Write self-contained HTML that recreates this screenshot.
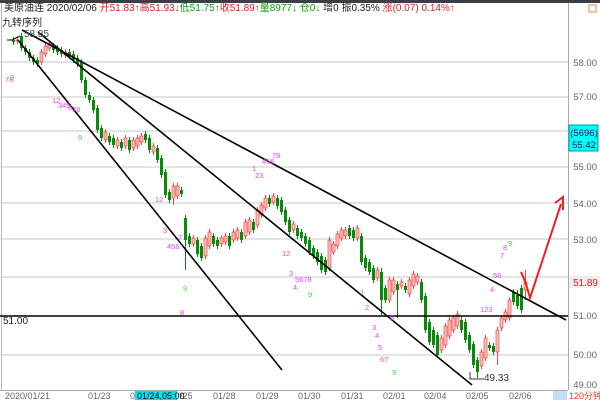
<!DOCTYPE html>
<html><head><meta charset="utf-8"><style>
body{margin:0;width:600px;height:400px;overflow:hidden;background:#fff;font-family:"Liberation Sans","Noto Sans CJK SC",sans-serif}
svg{position:absolute;left:0;top:0}
</style></head><body>
<svg width="600" height="400" viewBox="0 0 600 400" font-family="Liberation Sans, Noto Sans CJK SC, sans-serif">
<rect x="0" y="0" width="600" height="3" fill="#3a3f47"/>
<line x1="1.5" y1="3" x2="1.5" y2="390" stroke="#bbb"/>
<g stroke="#d4d4d4" stroke-width="1.3">
<line x1="0" y1="62" x2="568" y2="62"/><line x1="0" y1="97" x2="568" y2="97"/>
<line x1="0" y1="131" x2="568" y2="131"/><line x1="0" y1="167" x2="568" y2="167"/>
<line x1="0" y1="203" x2="568" y2="203"/><line x1="0" y1="239" x2="568" y2="239"/>
<line x1="0" y1="277" x2="568" y2="277"/><line x1="0" y1="355" x2="568" y2="355"/>
</g>
<path stroke="#0a8a0a" stroke-width="1" fill="none" d="M13.5 37V45 M21.5 33V51 M25.5 45V55 M29.5 49V61 M33.5 55V65 M37.5 57V67 M53.5 43V53 M57.5 45V55 M61.5 47V57 M69.5 49V59 M73.5 51V63 M77.5 55V67 M81.5 59V83 M85.5 77V98 M89.5 92V103 M93.5 97V113 M97.5 105V133 M101.5 125V141 M109.5 133V145 M113.5 135V148 M121.5 139V151 M129.5 137V153 M145.5 131V143 M149.5 135V153 M157.5 145V163 M161.5 155V178 M165.5 169V198 M169.5 189V203 M181.5 187V197 M185.5 215V270 M189.5 233V247 M197.5 237V257 M201.5 243V261 M213.5 233V247 M217.5 237V249 M229.5 233V249 M241.5 229V243 M253.5 219V233 M269.5 195V207 M277.5 195V209 M281.5 197V215 M285.5 207V225 M289.5 217V235 M297.5 225V239 M301.5 229V241 M305.5 233V247 M309.5 237V255 M313.5 245V259 M317.5 249V265 M321.5 253V273 M325.5 257V275 M349.5 225V239 M353.5 227V241 M361.5 233V265 M365.5 255V271 M369.5 259V275 M373.5 265V283 M381.5 268V315 M385.5 285V303 M397.5 281V318 M405.5 283V293 M421.5 279V303 M425.5 293V333 M429.5 319V345 M433.5 327V348 M437.5 332V358 M461.5 317V333 M465.5 319V343 M469.5 332V353 M473.5 341V368 M477.5 357V378 M489.5 342V351 M493.5 343V355 M513.5 289V305 M517.5 290V309 M521.5 285V313"/>
<path fill="#0a8a0a" d="M12 40h3V42h-3z M20 36h3V48h-3z M24 48h3V52h-3z M28 52h3V58h-3z M32 58h3V62h-3z M36 60h3V64h-3z M52 46h3V50h-3z M56 48h3V52h-3z M60 50h3V54h-3z M68 52h3V56h-3z M72 54h3V60h-3z M76 58h3V64h-3z M80 62h3V80h-3z M84 80h3V95h-3z M88 95h3V100h-3z M92 100h3V110h-3z M96 108h3V130h-3z M100 128h3V138h-3z M108 136h3V142h-3z M112 138h3V145h-3z M120 142h3V148h-3z M128 140h3V150h-3z M144 134h3V140h-3z M148 138h3V150h-3z M156 148h3V160h-3z M160 158h3V175h-3z M164 172h3V195h-3z M168 192h3V200h-3z M180 190h3V194h-3z M184 218h3V240h-3z M188 236h3V244h-3z M196 240h3V254h-3z M200 246h3V258h-3z M212 236h3V244h-3z M216 240h3V246h-3z M228 236h3V246h-3z M240 232h3V240h-3z M252 222h3V230h-3z M268 198h3V204h-3z M276 198h3V206h-3z M280 200h3V212h-3z M284 210h3V222h-3z M288 220h3V232h-3z M296 228h3V236h-3z M300 232h3V238h-3z M304 236h3V244h-3z M308 240h3V252h-3z M312 248h3V256h-3z M316 252h3V262h-3z M320 256h3V270h-3z M324 260h3V272h-3z M348 228h3V236h-3z M352 230h3V238h-3z M360 236h3V262h-3z M364 258h3V268h-3z M368 262h3V272h-3z M372 268h3V280h-3z M380 272h3V300h-3z M384 288h3V300h-3z M396 284h3V290h-3z M404 286h3V290h-3z M420 282h3V300h-3z M424 296h3V330h-3z M428 322h3V342h-3z M432 330h3V345h-3z M436 335h3V355h-3z M460 320h3V330h-3z M464 322h3V340h-3z M468 335h3V350h-3z M472 344h3V365h-3z M476 360h3V372h-3z M488 345h3V348h-3z M492 346h3V352h-3z M512 292h3V302h-3z M516 295h3V306h-3z M520 288h3V310h-3z"/>
<path stroke="#f04848" stroke-width="1" fill="none" d="M17.5 37V44 M41.5 49V65 M45.5 43V57 M49.5 41V51 M65.5 49V58 M105.5 129V143 M117.5 137V149 M125.5 135V149 M133.5 137V151 M137.5 135V149 M141.5 133V145 M153.5 143V155 M173.5 183V205 M177.5 183V199 M193.5 235V247 M205.5 235V259 M209.5 229V249 M221.5 235V247 M225.5 233V245 M233.5 229V243 M237.5 227V241 M245.5 219V239 M249.5 217V235 M257.5 207V228 M261.5 202V218 M265.5 195V211 M273.5 193V205 M293.5 221V233 M329.5 237V271 M333.5 241V255 M337.5 231V249 M341.5 227V241 M345.5 227V239 M357.5 225V241 M377.5 267V281 M389.5 277V303 M393.5 277V295 M401.5 279V289 M409.5 277V297 M413.5 271V289 M417.5 273V285 M441.5 335V353 M445.5 323V348 M449.5 317V339 M453.5 315V333 M457.5 311V329 M481.5 349V369 M485.5 335V361 M497.5 327V365 M501.5 315V331 M505.5 309V323 M509.5 297V321 M525.5 270V300"/>
<path fill="#fac0c0" stroke="#f04848" stroke-width="0.7" d="M16 40h3V41h-3z M40 52h3V62h-3z M44 46h3V54h-3z M48 44h3V48h-3z M64 52h3V55h-3z M104 132h3V140h-3z M116 140h3V146h-3z M124 138h3V146h-3z M132 140h3V148h-3z M136 138h3V146h-3z M140 136h3V142h-3z M152 146h3V152h-3z M172 186h3V198h-3z M176 186h3V196h-3z M192 238h3V244h-3z M204 238h3V256h-3z M208 232h3V246h-3z M220 238h3V244h-3z M224 236h3V242h-3z M232 232h3V240h-3z M236 230h3V238h-3z M244 222h3V236h-3z M248 220h3V232h-3z M256 210h3V225h-3z M260 205h3V215h-3z M264 198h3V208h-3z M272 196h3V202h-3z M292 224h3V230h-3z M328 240h3V268h-3z M332 244h3V252h-3z M336 234h3V246h-3z M340 230h3V238h-3z M344 230h3V236h-3z M356 228h3V238h-3z M376 270h3V278h-3z M388 280h3V300h-3z M392 280h3V292h-3z M400 282h3V286h-3z M408 280h3V294h-3z M412 274h3V286h-3z M416 276h3V282h-3z M440 338h3V350h-3z M444 326h3V345h-3z M448 320h3V336h-3z M452 318h3V330h-3z M456 314h3V326h-3z M480 352h3V366h-3z M484 338h3V358h-3z M496 330h3V352h-3z M500 318h3V328h-3z M504 312h3V320h-3z M508 300h3V318h-3z M524 282h3V290h-3z"/>
<g stroke="#000" stroke-width="1.6" fill="none">
<line x1="22" y1="30" x2="566" y2="320"/>
<line x1="38" y1="32" x2="472" y2="385"/>
<line x1="18" y1="40" x2="282" y2="370"/>
<line x1="0" y1="316" x2="568" y2="316"/>
<polyline points="7,40 12,40 20,36" stroke-width="1"/>
<polyline points="484,379 470,379 470,372" stroke-width="1" stroke="#333"/>
</g>
<g stroke="#f02020" stroke-width="2" fill="none">
<path d="M521,272 Q526,282 530,298 L561,204"/>
<path d="M555,203 L563,197 L563,210"/>
</g>
<g font-size="10" fill="#222">
<text x="4" y="11">美原油连 2020/02/06 <tspan fill="#e02020">开51.83↑高51.93↓</tspan><tspan fill="#10a010">低51.75↑</tspan><tspan fill="#e02020">收51.89↑</tspan><tspan fill="#10a010">量8977↓ 仓0↓</tspan> 增0 振0.35% <tspan fill="#e02020">涨(0.07) 0.14%↑</tspan></text>
<text x="2" y="26">九转序列</text>
<text x="24" y="37" fill="#444">58.85</text>
<text x="484" y="381" fill="#333">49.33</text>
<text x="3" y="324">51.00</text>
</g>
<g font-size="7.5" fill="#f040f0">
<text x="5" y="82">78</text><text x="52" y="103">12</text><text x="58" y="108">345</text><text x="68" y="110">6</text><text x="72" y="112">78</text>
<text x="155" y="202">12</text><text x="163" y="233">3</text><text x="167" y="249">456</text><text x="178" y="240">7</text><text x="180" y="315">8</text>
<text x="252" y="171">1</text><text x="255" y="178">23</text><text x="262" y="164">456</text><text x="272" y="158">78</text>
<text x="282" y="256">12</text><text x="289" y="276">3</text><text x="293" y="290">4</text><text x="295" y="282">5678</text>
<text x="360" y="295">1</text><text x="365" y="310">2</text><text x="372" y="330">3</text><text x="375" y="338">4</text><text x="378" y="350">5</text><text x="380" y="362">67</text>
<text x="390" y="320">8</text>
<text x="480" y="312">123</text><text x="490" y="292">4</text><text x="493" y="278">56</text><text x="500" y="258">7</text><text x="503" y="250">8</text>
</g>
<g font-size="7.5" fill="#40e040">
<text x="10" y="80">9</text><text x="78" y="140">9</text><text x="183" y="291">9</text><text x="308" y="297">9</text><text x="392" y="375">9</text><text x="508" y="246">9</text>
</g>
<line x1="568.5" y1="3" x2="568.5" y2="390" stroke="#aaa"/>
<rect x="589" y="5" width="7" height="7" fill="none" stroke="#f08050"/>
<g font-size="9.5" fill="#666" text-anchor="end">
<text x="597" y="66">58.00</text><text x="597" y="100">57.00</text>
<text x="597" y="170">55.00</text><text x="597" y="207">54.00</text><text x="597" y="243">53.00</text>
<text x="597" y="319">51.00</text><text x="597" y="358">50.00</text><text x="597" y="388">49.00</text>
</g>
<rect x="569" y="125" width="29" height="26" fill="#00ffff" stroke="#099"/>
<g font-size="9.5" fill="#114" text-anchor="middle"><text x="584" y="136">(5696)</text><text x="584" y="148">55.42</text></g>
<rect x="569" y="276" width="31" height="12" fill="#eee"/>
<text x="598" y="286" font-size="10" fill="#e02020" text-anchor="end">51.89</text>
<rect x="0" y="390" width="600" height="10" fill="#fff"/>
<line x1="0" y1="390.5" x2="568" y2="390.5" stroke="#aaa"/>
<g font-size="9" fill="#666">
<text x="5" y="399">2020/01/21</text><text x="88" y="399">01/23</text><text x="130" y="399">01</text>
<text x="180" y="399">/25</text><text x="213" y="399">01/28</text><text x="256" y="399">01/29</text>
<text x="298" y="399">01/30</text><text x="341" y="399">01/31</text><text x="383" y="399">02/01</text>
<text x="424" y="399">02/04</text><text x="466" y="399">02/05</text><text x="509" y="399">02/06</text>
</g>
<rect x="135" y="391" width="42" height="9" fill="#00e5ee"/>
<text x="137" y="399" font-size="9" fill="#000">01/24,05:00</text>
<rect x="553" y="391" width="14" height="9" fill="#c4dcf6"/>
<text x="569" y="399" font-size="9" fill="#e04020">120分钟</text>
</svg>
</body></html>
